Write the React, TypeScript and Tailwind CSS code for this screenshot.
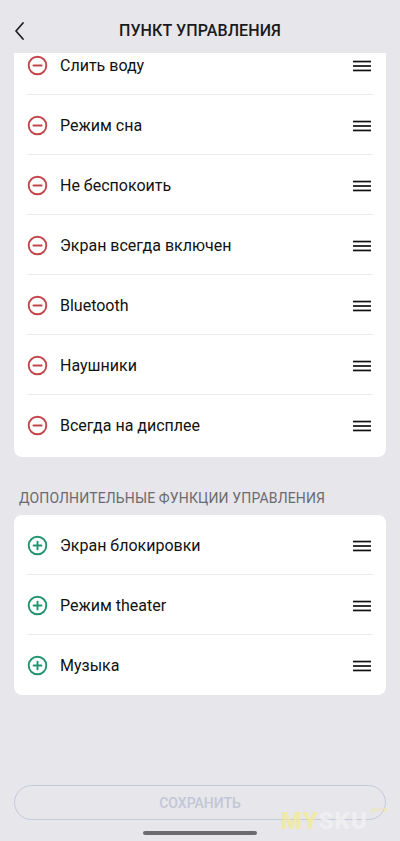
import React from "react";

const font = { fontFamily: "Roboto, 'Noto Sans', Arial, sans-serif" };

function MinusIcon() {
  return (
    <svg width="21" height="21" viewBox="0 0 21 21" className="shrink-0">
      <circle cx="10.5" cy="10.5" r="8.8" fill="none" stroke="#c2474b" strokeWidth="1.9" />
      <line x1="6.4" y1="10.5" x2="14.6" y2="10.5" stroke="#c2474b" strokeWidth="1.9" strokeLinecap="round" />
    </svg>
  );
}

function PlusIcon() {
  return (
    <svg width="21" height="21" viewBox="0 0 21 21" className="shrink-0">
      <circle cx="10.5" cy="10.5" r="8.8" fill="none" stroke="#23936d" strokeWidth="1.9" />
      <line x1="6.6" y1="10.5" x2="14.4" y2="10.5" stroke="#23936d" strokeWidth="1.9" strokeLinecap="round" />
      <line x1="10.5" y1="6.6" x2="10.5" y2="14.4" stroke="#23936d" strokeWidth="1.9" strokeLinecap="round" />
    </svg>
  );
}

function Handle() {
  return (
    <svg width="18" height="12" viewBox="0 0 18 12" className="shrink-0">
      <rect x="0" y="0.7" width="18" height="1.7" fill="#111" />
      <rect x="0" y="5.15" width="18" height="1.7" fill="#111" />
      <rect x="0" y="9.6" width="18" height="1.7" fill="#111" />
    </svg>
  );
}

type Item = { label: string };

function Row({ label, kind, last }: { label: string; kind: "minus" | "plus"; last: boolean }) {
  return (
    <div className="mx-[13px] h-[60px] flex items-center relative">
      <div className="w-[33px] flex items-center pt-[1px]">
        {kind === "minus" ? <MinusIcon /> : <PlusIcon />}
      </div>
      <div className="flex-1 text-[16px] text-[#111] leading-[20px] pt-[2px]">{label}</div>
      <div className="pr-[2px] flex items-center pt-[1px]">
        <Handle />
      </div>
      {!last && <div className="absolute left-0 right-0 bottom-0 h-px bg-[#ececef]" />}
    </div>
  );
}

export default function App() {
  const active: Item[] = [
    { label: "Слить воду" },
    { label: "Режим сна" },
    { label: "Не беспокоить" },
    { label: "Экран всегда включен" },
    { label: "Bluetooth" },
    { label: "Наушники" },
    { label: "Всегда на дисплее" },
  ];
  const extra: Item[] = [
    { label: "Экран блокировки" },
    { label: "Режим theater" },
    { label: "Музыка" },
  ];
  return (
    <div className="w-[400px] h-[841px] bg-[#e6e6eb] flex flex-col relative overflow-hidden" style={font}>
      <div className="h-[53px] flex items-center relative shrink-0">
        <div className="absolute left-[14px] top-[21px]">
          <svg width="12" height="20" viewBox="0 0 12 20">
            <polyline points="9,2 2,10 9,18" fill="none" stroke="#222" strokeWidth="1.8" strokeLinecap="round" strokeLinejoin="round" />
          </svg>
        </div>
        <div className="flex-1 text-center text-[16px] font-medium text-[#1a1a1a] tracking-[0.1px] pt-[9px]">
          ПУНКТ УПРАВЛЕНИЯ
        </div>
      </div>

      <div className="flex-1 overflow-hidden">
        <div className="-mt-[18px] mx-[14px] bg-white rounded-[8px]">
          {active.map((it, i) => (
            <Row key={it.label} label={it.label} kind="minus" last={i === active.length - 1} />
          ))}
          <div className="h-[2px]" />
        </div>
        <div className="mt-[31px] mb-[7px] px-[19px] text-[14px] leading-[20px] text-[#6a6a70] tracking-[0.15px]">
          ДОПОЛНИТЕЛЬНЫЕ ФУНКЦИИ УПРАВЛЕНИЯ
        </div>
        <div className="mx-[14px] bg-white rounded-[8px]">
          {extra.map((it, i) => (
            <Row key={it.label} label={it.label} kind="plus" last={i === extra.length - 1} />
          ))}
        </div>
      </div>

      <div className="shrink-0 px-[14px]">
        <div className="h-[35px] rounded-full border-[1.5px] border-[#c6cbd9] flex items-center justify-center text-[14px] font-medium text-[#c2c7d6] pt-[2px]">
          СОХРАНИТЬ
        </div>
        <div className="flex justify-center pt-[11px] pb-[6px]">
          <div className="w-[114px] h-[4px] rounded-full bg-[#6c6c70]" />
        </div>
      </div>

      <div className="absolute left-[281px] top-[808px] text-[24px] font-black tracking-[1px] leading-[26px] opacity-70 pointer-events-none">
        <span className="text-[#f3ec8c]">MY</span>
        <span className="text-[#f4f4f4]">SKU</span>
      </div>
      <div className="absolute left-[370px] top-[804px] text-[8px] font-bold text-[#f3ec8c] opacity-70">.com</div>
    </div>
  );
}
